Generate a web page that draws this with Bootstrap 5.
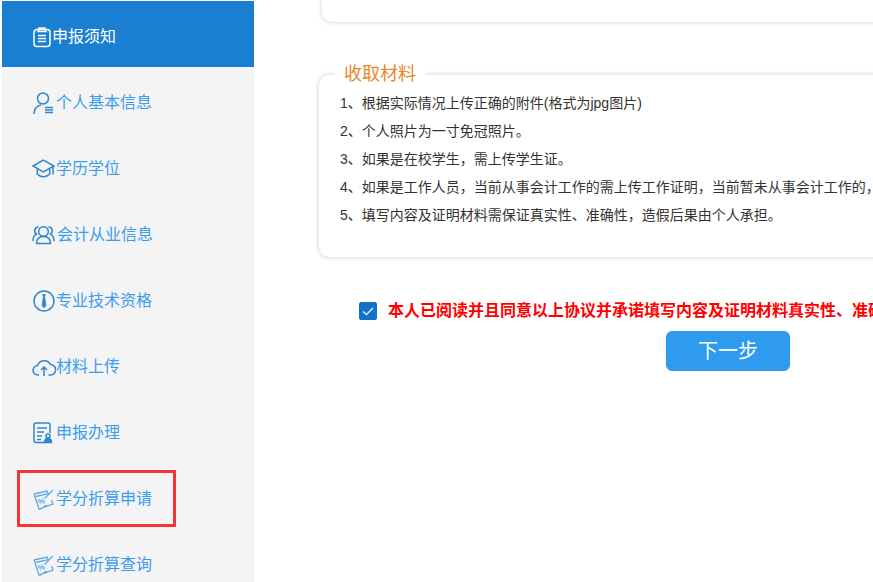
<!DOCTYPE html>
<html lang="zh-CN">
<head>
<meta charset="utf-8">
<title>申报须知</title>
<link href="https://cdn.jsdelivr.net/npm/bootstrap@5.3.0/dist/css/bootstrap.min.css" rel="stylesheet">
<style>
html,body{height:582px;overflow:hidden;background:#fff}
body{font-family:"Liberation Sans","Noto Sans CJK SC",sans-serif;color:#333;position:relative}
.side{width:252px;margin-left:2px;height:582px;background:#f4f4f4;overflow:hidden;flex:none;padding-top:1px}
.side .nav-link{flex:none;height:66px;padding:5px 0 0 30px;color:#3a9cf0;font-size:16px}
.side .nav-link.active-item{background:#1a7fd0;color:#fff}
.side svg{flex:none;fill:none;stroke:#2d86cf;stroke-width:1.5}
.side .active-item svg{stroke:#fff}
.side svg.lite{stroke:#5fa9e6;stroke-width:1.3}
.mainp{flex:1 1 auto;min-width:0;overflow:hidden;padding-left:65px}
.box{border-radius:10px;background:#fff;box-shadow:0 0 4px 1px #cfddec;width:760px;border:0}
.box-top{height:22px;margin-left:3px;border-radius:0 0 10px 10px}
.box-main{margin-top:53px;height:182px;padding:14px 0 0 21px;position:relative}
.box-title{position:absolute;left:16px;top:-14px;background:#fff;padding:0 9px;font-size:18px;line-height:26px;color:#e8872a}
.rule-line{font-size:14px;line-height:28px;white-space:nowrap;margin:0}
.agree{margin:45px 0 0 40px;gap:11px;white-space:nowrap}
.agree .form-check-input{width:18px;height:18px;margin:0;flex:none;background-color:#0f74c8;border-color:#0f74c8;border-radius:2px;background-image:url("data:image/svg+xml,%3csvg xmlns='http://www.w3.org/2000/svg' viewBox='0 0 18 18'%3e%3cpath fill='none' stroke='%23dcecfa' stroke-width='1.500' d='M4 9.500l3.500 3L14 6'/%3e%3c/svg%3e");background-size:18px 18px}
.agree label{font-size:16px;font-weight:700;color:#f00;line-height:18px}
.next-btn{display:block;margin:11px 0 0 347px;width:124px;height:40px;padding:0;background:#2f9bef;border-color:#2f9bef;color:#fff;font-size:20px;border-radius:6px}
.mark-box{position:absolute;left:17px;top:470px;width:159px;height:57px;border:3px solid #f53535}
.pct{font:700 8px "Liberation Sans",sans-serif;fill:#5fa9e6;stroke:none}
</style>
</head>
<body class="d-flex">
<nav class="side nav flex-column flex-nowrap">
  <a class="nav-link active-item d-flex align-items-center" href="#"><svg width="20" height="22" viewBox="0 0 20 22"><rect x="2" y="3.500" width="16" height="17" rx="3"/><path d="M7 3.500V2h6v1.500l1 2H6zM6 9.500h8M6 12.500h8M6 15.500h8"/></svg>申报须知</a>
  <a class="nav-link d-flex align-items-center" href="#"><svg width="24" height="24" viewBox="0 0 24 24"><circle cx="11" cy="7.500" r="5.500"/><path d="M2 23c0-5 3-8 7-9"/><path stroke-width="1.500" d="M13 16.500h8M13 19h8M13 21.500h8"/></svg>个人基本信息</a>
  <a class="nav-link d-flex align-items-center" href="#"><svg width="24" height="20" viewBox="0 0 24 20"><path d="M1 7 11.300 1 22 7l-10.700 6z"/><path d="M5.300 10v5c3 3.500 9 3.500 12.400 0v-5M21 8v7.500"/></svg>学历学位</a>
  <a class="nav-link d-flex align-items-center" href="#"><svg width="25" height="20" viewBox="0 0 25 20"><circle cx="11.500" cy="6.500" r="4.800"/><path d="M4.500 18.500c0-5 3-7 7-7s7 2 7 7z"/><path d="M6.500 2a3.800 3.800 0 0 0-2 7c-2 1-3.500 3-3.500 7M16.500 2a3.800 3.800 0 0 1 2 7c2 1 3.500 3 3.500 7"/></svg>会计从业信息</a>
  <a class="nav-link d-flex align-items-center" href="#"><svg width="24" height="22" viewBox="0 0 24 22"><circle cx="12" cy="11" r="10"/><path fill="#2d86cf" stroke-width=".6" d="M10.500 4.500h3l-.8 2 1.300 9-2 2.500-2-2.500 1.300-9z"/></svg>专业技术资格</a>
  <a class="nav-link d-flex align-items-center" href="#"><svg width="24" height="20" viewBox="0 0 24 20"><path d="M7 18H6a4.700 4.700 0 0 1-.5-9.400 7 7 0 0 1 13-1 5.200 5.200 0 0 1 0 10.400h-2"/><path d="M12 19v-9M9 13l3-3 3 3"/></svg>材料上传</a>
  <a class="nav-link d-flex align-items-center" href="#"><svg width="24" height="22" viewBox="0 0 24 22"><path d="M13 20.500H4a2 2 0 0 1-2-2V3a2 2 0 0 1 2-2h12a2 2 0 0 1 2 2v8"/><path stroke-width="1.600" d="M5 6h10M5 10h7M5 14h5M5 17.500h4"/><circle cx="16" cy="14" r="2"/><path fill="#2d86cf" d="M12.500 20.500c0-2.500 1.500-4 3.500-4s3.500 1.500 3.500 4z"/></svg>申报办理</a>
  <a class="nav-link d-flex align-items-center" href="#"><svg class="lite" width="24" height="22" viewBox="0 0 24 22"><path d="M2 6 15 3l1.500 4M2 6l5 15 14-5-1.500-4M4 8.500l11-2.700M21 2l-8.500 8.500M8 21c3-.5 4-4 7-3.500"/><text class="pct" x="6" y="16" transform="rotate(-15 9 14)">%</text></svg>学分折算申请</a>
  <a class="nav-link d-flex align-items-center" href="#"><svg class="lite" width="24" height="22" viewBox="0 0 24 22"><path d="M2 6 15 3l1.500 4M2 6l5 15 14-5-1.500-4M4 8.500l11-2.700M21 2l-8.500 8.500M8 21c3-.5 4-4 7-3.500"/><text class="pct" x="6" y="16" transform="rotate(-15 9 14)">%</text></svg>学分折算查询</a>
</nav>
<main class="mainp">
  <div class="box box-top"></div>
  <section class="box box-main">
    <div class="box-title">收取材料</div>
    <p class="rule-line">1、根据实际情况上传正确的附件(格式为jpg图片)</p>
    <p class="rule-line">2、个人照片为一寸免冠照片。</p>
    <p class="rule-line">3、如果是在校学生，需上传学生证。</p>
    <p class="rule-line">4、如果是工作人员，当前从事会计工作的需上传工作证明，当前暂未从事会计工作的，</p>
    <p class="rule-line">5、填写内容及证明材料需保证真实性、准确性，造假后果由个人承担。</p>
  </section>
  <div class="agree d-flex align-items-center">
    <input class="form-check-input" type="checkbox" id="agreeChk" checked>
    <label for="agreeChk">本人已阅读并且同意以上协议并承诺填写内容及证明材料真实性、准确性</label>
  </div>
  <button type="button" class="btn btn-primary next-btn">下一步</button>
</main>
<div class="mark-box"></div>
<script src="https://cdn.jsdelivr.net/npm/bootstrap@5.3.0/dist/js/bootstrap.bundle.min.js"></script>
</body>
</html>
